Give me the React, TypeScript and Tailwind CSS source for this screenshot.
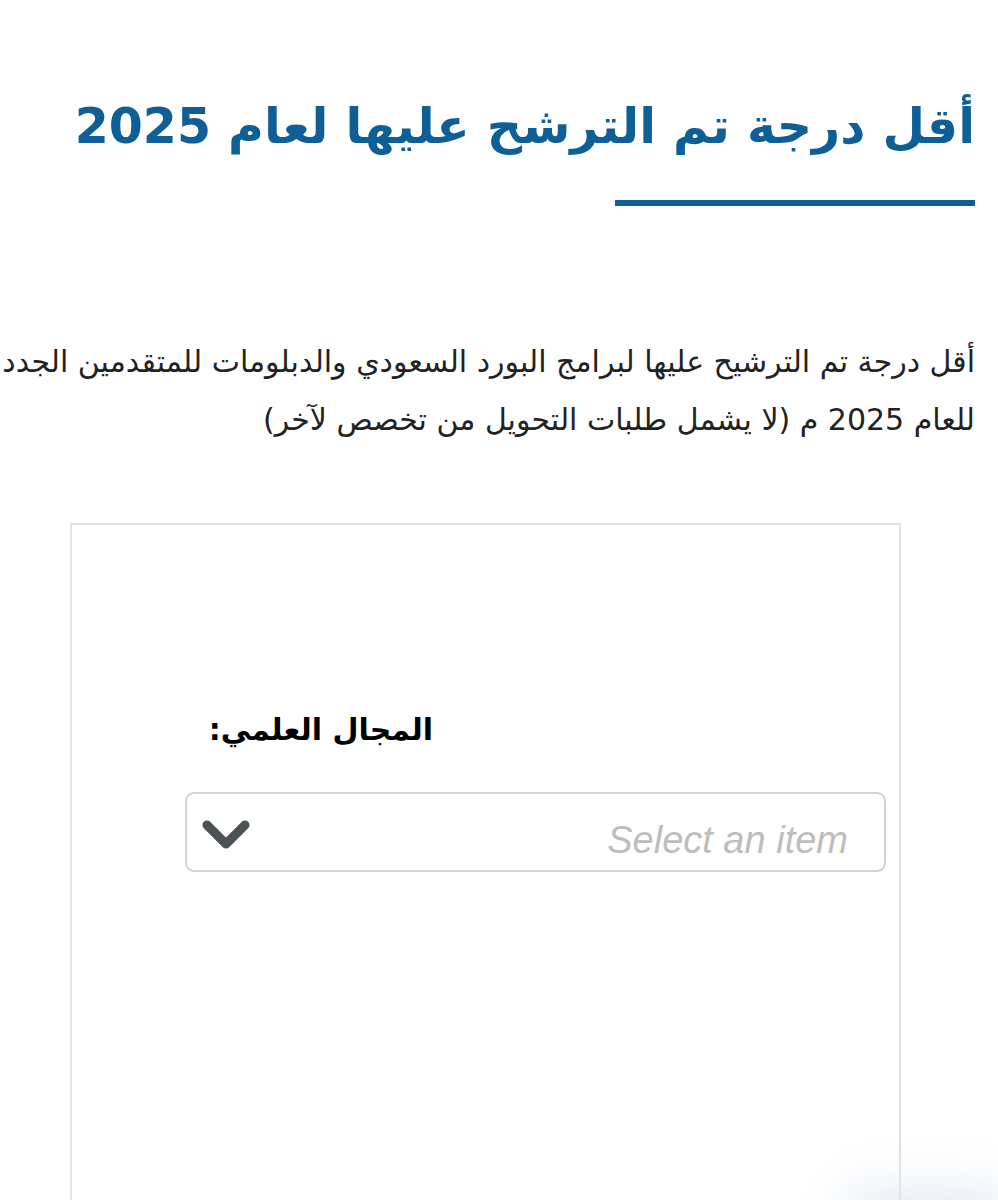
import React from 'react';

const ChevronDown = () => (
  <svg width="50" height="32" viewBox="0 0 50 32" fill="none" className="mt-[6px]">
    <path d="M6 6 L25 25 L44 6" stroke="#4b5256" strokeWidth="9" strokeLinecap="round" strokeLinejoin="round" />
  </svg>
);

export default function App() {
  return (
    <div dir="rtl" className="relative w-[998px] h-[1200px] overflow-hidden bg-white" style={{ fontFamily: '"DejaVu Sans", sans-serif' }}>
      {/* Heading */}
      <div className="pr-[23px] pt-[92px]">
        <h1 className="text-[49px] leading-[70px] font-bold text-[#0f5f97] whitespace-nowrap">
          أقل درجة تم الترشح عليها لعام 2025
        </h1>
        <div className="mt-[38px] h-[6px] w-[360px] bg-[#0f5f97]" />
      </div>

      {/* Intro text */}
      <p className="pr-[23px] mt-[127px] text-[30px] leading-[58px] text-[#222] whitespace-nowrap">
        أقل درجة تم الترشيح عليها لبرامج البورد السعودي والدبلومات للمتقدمين الجدد
        <br />
        للعام 2025 م (لا يشمل طلبات التحويل من تخصص لآخر)
      </p>

      {/* Form card */}
      <div className="mr-[97px] ml-[70px] mt-[74px] h-[700px] border-2 border-[#e2e2e2] border-b-0">
        <div className="pt-[185px] pr-[466px]">
          <label className="block text-[30px] font-bold text-black leading-[40px]">المجال العلمي:</label>
        </div>
        <div className="mt-[42px] mr-[13px] ml-[113px] h-[80px] rounded-[9px] border-2 border-[#cfd2d6] flex items-center justify-between pr-[36px] pl-[14px]">
          <span dir="ltr" className="mt-[16px] text-[38px] italic text-[#bdbdbd]" style={{ fontFamily: '"Liberation Sans", sans-serif' }}>
            Select an item
          </span>
          <ChevronDown />
        </div>
      </div>

      {/* faint floating shadow at bottom corner */}
      <div className="absolute right-[-20px] bottom-[-50px] w-[180px] h-[70px] rounded-full bg-[#dce5f1] blur-xl opacity-60" />
    </div>
  );
}
